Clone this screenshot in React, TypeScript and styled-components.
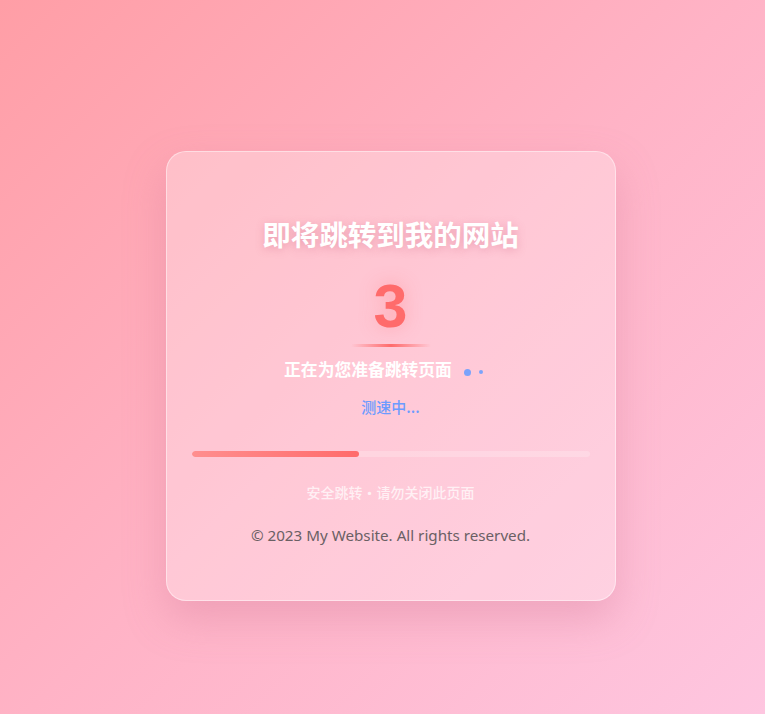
import React from "react";
import styled, { createGlobalStyle } from "styled-components";

const GlobalStyle = createGlobalStyle`
  html, body {
    margin: 0;
    padding: 0;
    height: 100%;
  }
  body {
    font-family: "Noto Sans", "Noto Sans CJK SC", sans-serif;
  }
  #root {
    min-height: 100vh;
  }
`;

const Page = styled.div`
  box-sizing: border-box;
  min-height: 100vh;
  padding: 38px 0 0 16px;
  display: flex;
  align-items: center;
  justify-content: center;
  background: linear-gradient(135deg, #ff9ea6 0%, #ffb3c6 50%, #fec6e0 100%);
`;

const Card = styled.div`
  box-sizing: border-box;
  width: 450px;
  height: 450px;
  padding: 64px 25px 0;
  border-radius: 20px;
  background: rgba(255, 255, 255, 0.28);
  border: 1px solid rgba(255, 255, 255, 0.45);
  box-shadow: 0 18px 40px rgba(210, 120, 150, 0.35);
  display: flex;
  flex-direction: column;
  align-items: center;
  text-align: center;
`;

const Title = styled.h1`
  margin: 0;
  font-family: "Noto Sans CJK SC", sans-serif;
  font-size: 28.5px;
  line-height: 36px;
  font-weight: 700;
  color: #ffffff;
  text-shadow: 0 2px 8px rgba(200, 90, 120, 0.35);
`;

const Count = styled.div`
  margin-top: 24px;
  font-family: "Liberation Sans", Arial, sans-serif;
  font-size: 61px;
  line-height: 60px;
  font-weight: 700;
  color: #ff6b6b;
  text-shadow: 0 0 18px rgba(255, 107, 107, 0.35);
`;

const Divider = styled.div`
  margin-top: 8px;
  width: 80px;
  height: 3px;
  border-radius: 2px;
  background: linear-gradient(90deg, rgba(255, 107, 107, 0), #ff6b6b 50%, rgba(255, 107, 107, 0));
`;

const StatusRow = styled.div`
  margin-top: 10px;
  display: flex;
  align-items: center;
  gap: 12px;
`;

const Status = styled.span`
  font-family: "Noto Sans CJK SC", sans-serif;
  font-size: 16.8px;
  line-height: 24px;
  font-weight: 700;
  color: #ffffff;
`;

const Dots = styled.span`
  display: inline-flex;
  align-items: center;
  gap: 8px;
  width: 33px;
  padding-top: 6px;
`;

const Dot = styled.span<{ $size: number }>`
  width: ${(p) => p.$size}px;
  height: ${(p) => p.$size}px;
  border-radius: 50%;
  background: #6b9fff;
  opacity: 0.9;
`;

const Speed = styled.div`
  margin-top: 15px;
  font-family: "Noto Sans CJK SC", sans-serif;
  font-size: 15px;
  line-height: 22px;
  font-weight: 500;
  color: #6b9bff;
`;

const Track = styled.div`
  margin-top: 33px;
  width: 100%;
  height: 6px;
  border-radius: 3px;
  background: rgba(255, 255, 255, 0.22);
  overflow: hidden;
`;

const Fill = styled.div`
  height: 100%;
  border-radius: 3px;
  background: linear-gradient(90deg, #ff8e8e, #ff6b6b);
`;

const Notice = styled.div`
  margin-top: 25px;
  font-family: "Noto Sans CJK SC", sans-serif;
  font-size: 14px;
  line-height: 20px;
  font-weight: 500;
  color: rgba(255, 255, 255, 0.72);
`;

const Footer = styled.div`
  margin-top: 21px;
  font-family: "Noto Sans", "Open Sans", sans-serif;
  font-size: 15.2px;
  line-height: 24px;
  color: #6a6064;
`;

export default function App() {
  const progress = 42;
  return (
    <>
      <GlobalStyle />
      <Page>
        <Card>
          <Title>即将跳转到我的网站</Title>
          <Count>3</Count>
          <Divider />
          <StatusRow>
            <Status>正在为您准备跳转页面</Status>
            <Dots>
              <Dot $size={7} />
              <Dot $size={4} />
            </Dots>
          </StatusRow>
          <Speed>测速中...</Speed>
          <Track>
            <Fill style={{ width: `${progress}%` }} />
          </Track>
          <Notice>安全跳转·请勿关闭此页面</Notice>
          <Footer>© 2023 My Website. All rights reserved.</Footer>
        </Card>
      </Page>
    </>
  );
}
